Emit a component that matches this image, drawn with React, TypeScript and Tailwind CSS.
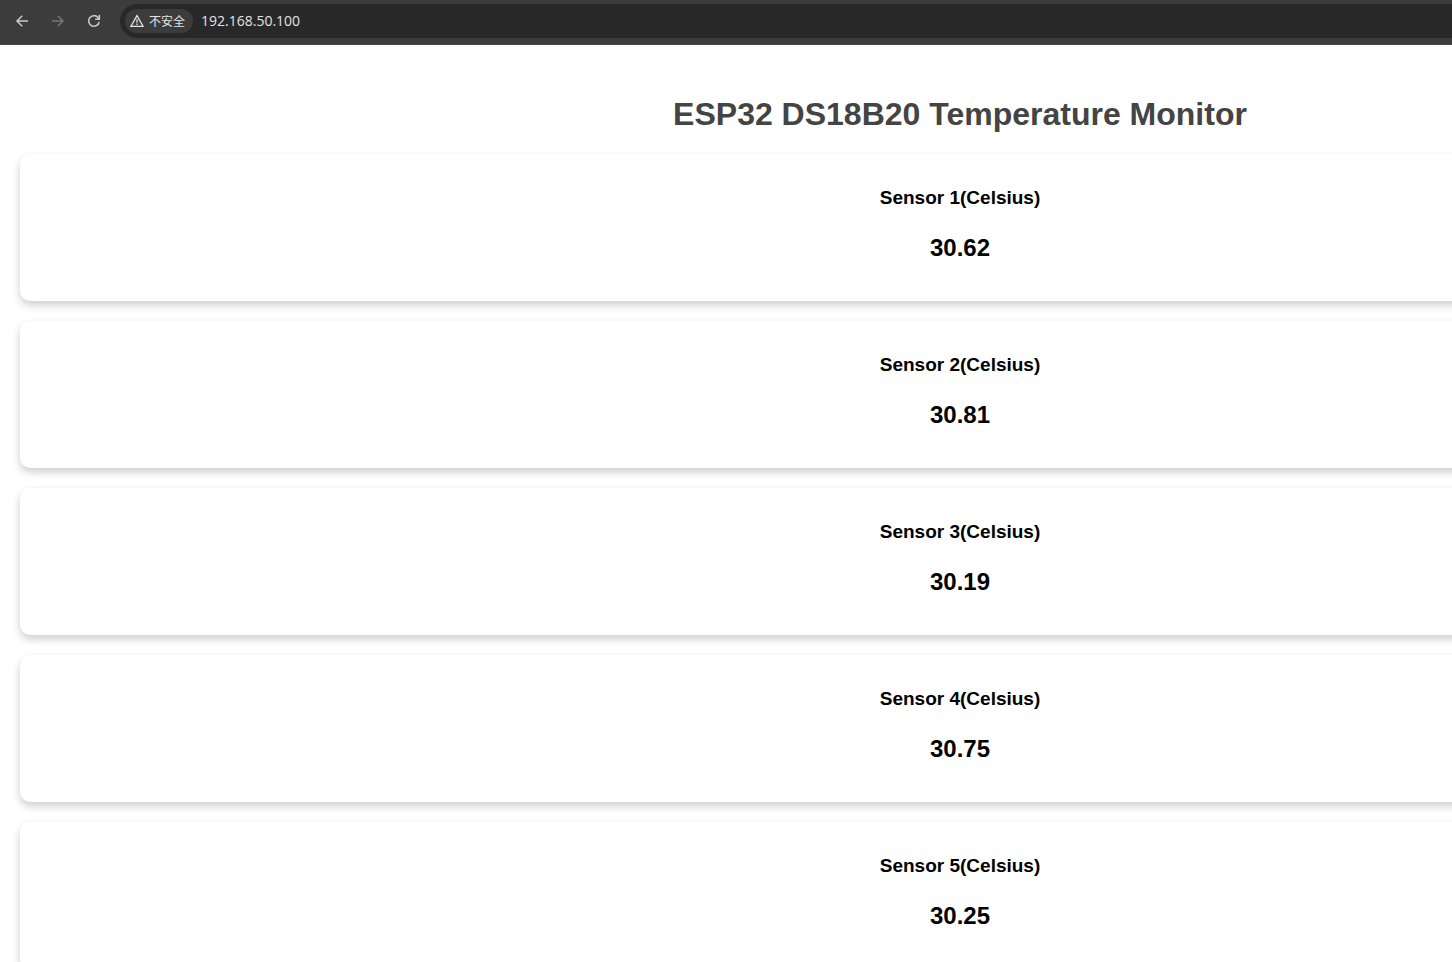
const sensors = [
  { id: 1, value: '30.62' },
  { id: 2, value: '30.81' },
  { id: 3, value: '30.19' },
  { id: 4, value: '30.75' },
  { id: 5, value: '30.25' },
];

function BrowserBar() {
  return (
    <header className="flex h-[45px] items-start border-b border-[#4a4a4a] bg-[#3c3c3c] pt-1">
      <nav className="flex h-[34px] w-[120px] shrink-0 items-center gap-5 pl-[14px] text-[#c7c7c7]">
        <button type="button" aria-label="Back" className="size-4">
          <svg viewBox="0 0 16 16" className="size-4" fill="none" stroke="currentColor" strokeWidth="1.5">
            <path d="M14 8H3M8.2 2.8 3 8l5.2 5.2" />
          </svg>
        </button>
        <button type="button" aria-label="Forward" className="size-4 text-[#757575]">
          <svg viewBox="0 0 16 16" className="size-4" fill="none" stroke="currentColor" strokeWidth="1.5">
            <path d="M2 8h11M7.8 2.8 13 8l-5.2 5.2" />
          </svg>
        </button>
        <button type="button" aria-label="Reload" className="size-4">
          <svg viewBox="0 0 16 16" className="size-4" fill="none" stroke="currentColor" strokeWidth="1.6">
            <path d="M13.2 8.8A5.3 5.3 0 1 1 11.8 4.3L13 5.5M13.3 2v4.2H9.2" />
          </svg>
        </button>
      </nav>
      <div className="flex h-[34px] flex-1 items-center gap-2 rounded-l-full bg-[#282828] pl-[5px]">
        <button
          type="button"
          className="flex h-6 w-[68px] shrink-0 items-center gap-[5px] rounded-full bg-[#3c3c3c] pl-[5px] font-['Noto_Sans_CJK_SC',sans-serif] text-[12px] leading-6 whitespace-nowrap text-[#e3e3e3]"
        >
          <svg viewBox="0 0 14 14" className="size-[14px] shrink-0" fill="none" stroke="currentColor" strokeWidth="1.3">
            <path d="M7 1.6 13 12.3H1Z" />
            <path d="M7 5.2v3.5M7 9.6v1.3" />
          </svg>
          不安全
        </button>
        <input
          type="text"
          aria-label="Address"
          defaultValue="192.168.50.100"
          className="h-6 min-w-0 flex-1 bg-transparent font-['Open_Sans',sans-serif] text-[14px] leading-6 text-[#e3e3e3] outline-none"
        />
      </div>
    </header>
  );
}

export default function App() {
  return (
    <div className="h-screen overflow-hidden bg-white font-['Liberation_Sans',Arial,sans-serif]">
      <div className="min-w-[1920px]">
        <BrowserBar />
        <main className="px-5 pt-[50px] text-center">
          <h1 className="text-[32px] leading-[38px] font-bold text-[#444444]">
            ESP32 DS18B20 Temperature Monitor
          </h1>
          <div className="mt-[21px] flex flex-col gap-5">
            {sensors.map((sensor) => (
              <section
                key={sensor.id}
                className="flex h-[147px] flex-col items-center gap-[25px] rounded-[10px] bg-white pt-[33px] text-black shadow-[0_4px_8px_0_rgba(0,0,0,0.2)]"
              >
                <h3 className="text-[19px] leading-[22px] font-bold">Sensor {sensor.id}(Celsius)</h3>
                <p className="text-[24px] leading-[28px] font-bold">{sensor.value}</p>
              </section>
            ))}
          </div>
        </main>
      </div>
    </div>
  );
}
